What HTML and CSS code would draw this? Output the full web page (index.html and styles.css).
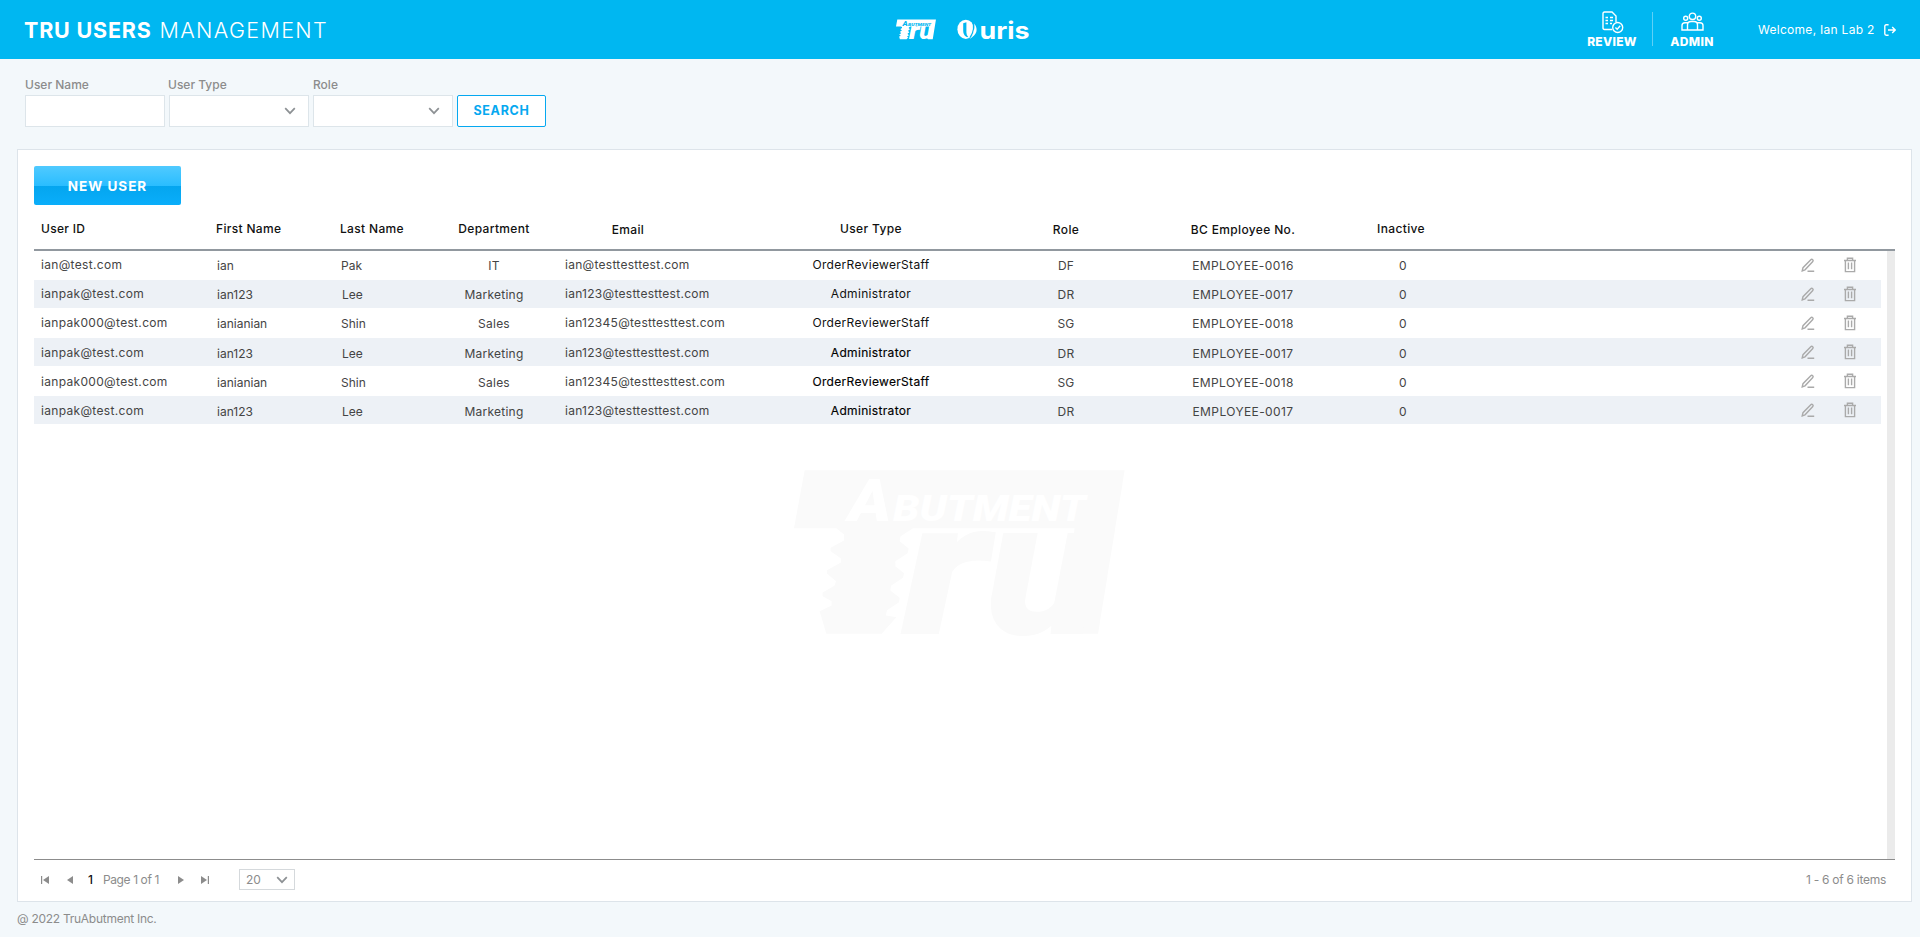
FILE: index.html
```html
<!DOCTYPE html>
<html lang="en">
<head>
<meta charset="utf-8">
<title>Tru Users Management</title>
<link rel="stylesheet" href="styles.css">
</head>
<body>
<svg class="defs" aria-hidden="true">
  <symbol id="edit" viewBox="0 0 14 14"><path d="M1.2 12.8L2 9.7L9.8 1.7Q10.7 .8 11.7 1.8Q12.6 2.7 11.8 3.6L4 11.8ZM6.5 13.2H13.2"/></symbol>
  <symbol id="trash" viewBox="0 0 14 16"><path d="M1 3.5H13M4.4 3.3V1.2H9.6V3.3M2.4 3.7V14.6H11.6V3.7M5.4 5.6V12.2M8.6 5.6V12.2"/></symbol>
  <symbol id="chev" viewBox="0 0 12 8"><path d="M1.2 1.2L6 6.2L10.8 1.2"/></symbol>
</svg>

<header class="topbar">
  <h1 class="title"><b>TRU USERS</b> <span>MANAGEMENT</span></h1>
  <div class="brands">
    <svg class="brand-tru" viewBox="43 47 993 494">
      <path fill="currentColor" d="M75 47H1035L955 538H838L885 221H400L362 246L360 260L387 282L384 296L347 320V335L373 356L370 370L334 394L332 408L360 430L358 443L322 467L318 483L350 488L306 538H140L120 470L156 453V440L129 425V414L165 393L169 380L142 357V347L184 324V312L153 290V280L193 258V240L170 221H43Z"/>
      <text class="tru-big" x="366" y="538" textLength="262" lengthAdjust="spacingAndGlyphs">r</text>
      <text class="tru-big" x="618" y="538" textLength="350" lengthAdjust="spacingAndGlyphs">u</text>
      <text class="tru-small" x="206" y="199" font-size="178" textLength="130" lengthAdjust="spacingAndGlyphs">A</text>
      <text class="tru-small" x="340" y="199" font-size="108" textLength="578" lengthAdjust="spacingAndGlyphs">BUTMENT</text>
    </svg>
    <svg class="brand-uris" viewBox="0 0 74 22">
      <ellipse cx="8.8" cy="10.3" rx="8.4" ry="9.6" fill="#fff"/>
      <path d="M6.2 4.2L9.4 3.2V13.5Q9.4 16.6 11.4 18.3Q6.2 17.6 6.2 12Z" fill="#00b7f1"/>
      <path d="M15.4 2.2Q18.8 10 13 18.6" fill="none" stroke="#00b7f1" stroke-width="1.2"/>
      <path d="M17.3 4.5Q23.6 13.5 12.6 20Q18.3 14 17.3 4.5Z" fill="#fff"/>
      <text class="uris" x="22.5" y="19.6" textLength="50" lengthAdjust="spacingAndGlyphs">uris</text>
    </svg>
  </div>
  <nav class="nav">
    <a class="nav-item review">
      <svg width="22" height="23" viewBox="0 0 22 23"><path d="M10 18.5H2.5Q1 18.5 1 17V2.5Q1 1 2.5 1H10L14 5V11M3.5 6.5H6M3.5 9.5H6M3.5 12.5H6M8 6.5H11M8 9.5H11M8 12.5H10"/><circle cx="15.7" cy="16.5" r="5"/><path d="M13.4 16.5L15.2 18.2L18.2 14.8"/></svg>
      <span>REVIEW</span>
    </a>
    <a class="nav-item admin">
      <svg width="23" height="19" viewBox="0 0 23 19"><circle cx="11.5" cy="4.3" r="3.2"/><circle cx="4.7" cy="6.3" r="2"/><circle cx="18.3" cy="6.3" r="2"/><path d="M6.5 18V13Q6.5 9.5 10 9.5H13Q16.5 9.5 16.5 13V18ZM6.5 18H1V13.5Q1 10.7 4 10.7H7M16.5 18H22V13.5Q22 10.7 19 10.7H16"/></svg>
      <span>ADMIN</span>
    </a>
  </nav>
  <div class="welcome"><span>Welcome, Ian Lab 2</span>
    <svg width="12" height="12" viewBox="0 0 12 12"><path d="M4.6 .8H2.2Q.8 .8 .8 2.2V9.8Q.8 11.2 2.2 11.2H4.6M4 6H11M8.2 3L11.2 6L8.2 9"/></svg>
  </div>
</header>

<form class="filters">
  <label class="field"><span class="l-name">User Name</span><i class="box"></i></label>
  <label class="field"><span class="l-type">User Type</span><i class="box"><svg class="chev"><use href="#chev"/></svg></i></label>
  <label class="field"><span class="l-role">Role</span><i class="box"><svg class="chev"><use href="#chev"/></svg></i></label>
  <button type="button" class="search"><span>SEARCH</span></button>
</form>

<main class="panel">
  <button type="button" class="new-user"><span>NEW USER</span></button>
  <div class="row head">
    <span class="c-id">User ID</span><span class="c-first">First Name</span><span class="c-last">Last Name</span><span class="c-mid">Department</span><span class="c-mid low">Email</span><span class="c-mid">User Type</span><span class="c-mid low">Role</span><span class="c-mid low">BC Employee No.</span><span class="c-mid inactive">Inactive</span>
  </div>
  <section class="body">
    <svg class="watermark" viewBox="43 47 993 494">
      <path fill="currentColor" d="M75 47H1035L955 538H838L885 221H400L362 246L360 260L387 282L384 296L347 320V335L373 356L370 370L334 394L332 408L360 430L358 443L322 467L318 483L350 488L306 538H140L120 470L156 453V440L129 425V414L165 393L169 380L142 357V347L184 324V312L153 290V280L193 258V240L170 221H43Z"/>
      <text class="tru-big" x="366" y="538" textLength="262" lengthAdjust="spacingAndGlyphs">r</text>
      <text class="tru-big" x="618" y="538" textLength="350" lengthAdjust="spacingAndGlyphs">u</text>
      <text class="tru-small" x="206" y="199" font-size="178" textLength="130" lengthAdjust="spacingAndGlyphs">A</text>
      <text class="tru-small" x="340" y="199" font-size="108" textLength="578" lengthAdjust="spacingAndGlyphs">BUTMENT</text>
    </svg>
    <div class="rows">
      <div class="row r1"><span class="c-id">ian@test.com</span><span class="c-first">ian</span><span class="c-last">Pak</span><span class="c-mid low">IT</span><span class="c-email">ian@testtesttest.com</span><span class="c-mid type">OrderReviewerStaff</span><span class="c-mid low">DF</span><span class="c-mid low emp">EMPLOYEE-0016</span><span class="c-mid low">0</span><i></i><svg class="edit"><use href="#edit"/></svg><svg class="trash"><use href="#trash"/></svg></div>
      <div class="row alt"><span class="c-id">ianpak@test.com</span><span class="c-first">ian123</span><span class="c-last lee">Lee</span><span class="c-mid low">Marketing</span><span class="c-email">ian123@testtesttest.com</span><span class="c-mid type">Administrator</span><span class="c-mid low">DR</span><span class="c-mid low emp">EMPLOYEE-0017</span><span class="c-mid low">0</span><i></i><svg class="edit"><use href="#edit"/></svg><svg class="trash"><use href="#trash"/></svg></div>
      <div class="row"><span class="c-id">ianpak000@test.com</span><span class="c-first">ianianian</span><span class="c-last">Shin</span><span class="c-mid low">Sales</span><span class="c-email">ian12345@testtesttest.com</span><span class="c-mid type">OrderReviewerStaff</span><span class="c-mid low">SG</span><span class="c-mid low emp">EMPLOYEE-0018</span><span class="c-mid low">0</span><i></i><svg class="edit"><use href="#edit"/></svg><svg class="trash"><use href="#trash"/></svg></div>
      <div class="row alt late"><span class="c-id">ianpak@test.com</span><span class="c-first">ian123</span><span class="c-last lee">Lee</span><span class="c-mid low">Marketing</span><span class="c-email">ian123@testtesttest.com</span><span class="c-mid type strong">Administrator</span><span class="c-mid low">DR</span><span class="c-mid low emp">EMPLOYEE-0017</span><span class="c-mid low">0</span><i></i><svg class="edit"><use href="#edit"/></svg><svg class="trash"><use href="#trash"/></svg></div>
      <div class="row late"><span class="c-id">ianpak000@test.com</span><span class="c-first">ianianian</span><span class="c-last">Shin</span><span class="c-mid low">Sales</span><span class="c-email">ian12345@testtesttest.com</span><span class="c-mid type strong">OrderReviewerStaff</span><span class="c-mid low">SG</span><span class="c-mid low emp">EMPLOYEE-0018</span><span class="c-mid low">0</span><i></i><svg class="edit"><use href="#edit"/></svg><svg class="trash"><use href="#trash"/></svg></div>
      <div class="row alt late"><span class="c-id">ianpak@test.com</span><span class="c-first">ian123</span><span class="c-last lee">Lee</span><span class="c-mid low">Marketing</span><span class="c-email">ian123@testtesttest.com</span><span class="c-mid type strong">Administrator</span><span class="c-mid low">DR</span><span class="c-mid low emp">EMPLOYEE-0017</span><span class="c-mid low">0</span><i></i><svg class="edit"><use href="#edit"/></svg><svg class="trash"><use href="#trash"/></svg></div>
    </div>
    <div class="scrollbar"></div>
  </section>
  <div class="pager">
    <svg class="p-first" width="8" height="8"><path d="M0 0H1.2V8H0ZM8 0V8L2 4Z"/></svg>
    <svg class="p-prev" width="6" height="8"><path d="M6 0V8L0 4Z"/></svg>
    <span class="p-cur">1</span>
    <span class="p-info">Page 1 of 1</span>
    <svg class="p-next" width="6" height="8"><path d="M0 0V8L6 4Z"/></svg>
    <svg class="p-last" width="8" height="8"><path d="M0 0V8L6 4ZM6.8 0H8V8H6.8Z"/></svg>
    <span class="size"><span>20</span><svg class="chev"><use href="#chev"/></svg></span>
    <span class="count">1 - 6 of 6 items</span>
  </div>
</main>
<footer class="foot">@ 2022 TruAbutment Inc.</footer>
</body>
</html>
```
FILE: styles.css
```css
* { box-sizing: border-box; }
body {
  margin: 0;
  height: 937px;
  overflow: hidden;
  display: flex;
  flex-direction: column;
  background: #f3f8fb;
  font: 12px/16px Inter, "Liberation Sans", sans-serif;
  color: #444;
}
svg { display: block; flex: none; }
.defs { width: 0; height: 0; position: absolute; }
span { white-space: nowrap; }

.tru-big { font: italic 900 574px Roboto, sans-serif; fill: currentColor; }
.tru-small { font-family: Roboto, sans-serif; font-style: italic; font-weight: 900; fill: var(--cut); }
.brand-tru, .brand-uris, .watermark { overflow: visible; }

.topbar {
  height: 59px;
  flex: none;
  display: grid;
  grid-template-columns: 896px 690px 156px 1fr;
  background: #00b7f1;
  color: #fff;
}
.title {
  margin: 0;
  padding: 17px 0 0 24px;
  display: flex;
  gap: 8px;
  font-size: 21.5px;
  line-height: 26px;
  font-weight: 300;
}
.title b { font-weight: 700; letter-spacing: .8px; }
.title span { letter-spacing: 1.35px; }
.brands { display: flex; gap: 21px; padding-top: 19px; }
.brand-tru { width: 40px; height: 21px; --cut: #00b7f1; }
.brand-uris { width: 74px; height: 22px; }
.uris { font: 700 24px Inter, sans-serif; fill: #fff; }
.nav { display: grid; grid-template-columns: 67px 79px; align-items: start; padding-top: 12px; }
.nav svg, .welcome svg { fill: none; stroke: #fff; stroke-width: 1.4; }
.nav-item {
  height: 34px;
  display: flex;
  flex-direction: column;
  align-items: center;
  font-size: 12px;
  line-height: 12px;
  font-weight: 800;
  letter-spacing: .3px;
}
.review { border-right: 1px solid #5fd0f6; padding-right: 14px; }
.review svg { margin: -1px 0 2px 2px; }
.admin { padding-right: 1px; }
.admin svg { margin: 0 0 5px; }
.welcome { display: flex; gap: 9px; padding: 22px 0 0 16px; letter-spacing: .28px; }
.welcome svg { margin-top: 2px; }

.filters {
  height: 90px;
  flex: none;
  display: flex;
  gap: 4px;
  padding: 18px 0 0 25px;
  color: #8c8c8c;
  font-weight: 500;
}
.field { width: 140px; }
.field span { display: block; height: 18px; }
.l-type { margin-left: -1px; }
.box {
  height: 32px;
  display: flex;
  align-items: center;
  justify-content: flex-end;
  padding-right: 12px;
  background: #fff;
  border: 1px solid #dde5ea;
}
.chev { width: 12px; height: 8px; fill: none; stroke: #8d9194; stroke-width: 1.7; }
.search {
  width: 89px;
  height: 32px;
  margin: 18px 0 0;
  padding: 0;
  background: #fff;
  border: 1px solid #05a8f0;
  border-radius: 2px;
  color: #05a8f0;
  font: 700 12.5px/16px Inter, sans-serif;
  letter-spacing: .7px;
}

.panel {
  width: 1895px;
  height: 753px;
  flex: none;
  margin-left: 17px;
  display: flex;
  flex-direction: column;
  background: #fff;
  border: 1px solid #dde4ea;
  padding: 16px 16px 0;
}
.new-user {
  width: 147px;
  height: 39px;
  flex: none;
  border: 0;
  border-radius: 2px;
  background: linear-gradient(#50caff 0, #2abdff 51%, #04a5ef 51%, #0aaefa 100%);
  color: #fff;
  font: 700 13.5px/16px Inter, sans-serif;
  letter-spacing: 1px;
}
.row {
  display: grid;
  grid-template-columns: 176px 124px 106px 108px 160px 326px 64px 290px 30px 1fr 42px 42px;
  width: 1847px;
  height: 30px;
  padding: 7px 10px 0 0;
}
.row.r1 { height: 29px; padding-top: 6px; }
.row.alt { height: 28px; padding-top: 6px; background: #edf1f6; }
.row.late span { margin-top: 1px; }
.row.head {
  height: 46px;
  flex: none;
  width: 1861px;
  padding-top: 16px;
  border-bottom: 2px solid #91989f;
  color: #111;
  font-weight: 500;
  letter-spacing: .33px;
}
.c-id { padding-left: 7px; letter-spacing: .32px; }
.head .c-id { letter-spacing: .3px; }
.c-first { padding: 1px 0 0 7px; }
.c-last { padding: 1px 0 0 7px; }
.c-last.lee { padding-left: 8px; }
.head .c-first, .head .c-last { padding: 0 0 0 6px; }
.c-mid { display: flex; justify-content: center; letter-spacing: .25px; }
.head .c-mid { letter-spacing: .35px; }
.low { padding-top: 1px; }
.c-mid.emp { letter-spacing: .4px; }
.c-email { padding-left: 17px; letter-spacing: .28px; }
.c-mid.type { color: #111; letter-spacing: .33px; }
.c-mid.strong { color: #000; -webkit-text-stroke: .15px #000; }
.inactive { margin-left: -4px; }
.edit, .trash { fill: none; stroke: #aaa; stroke-width: 1.4; justify-self: center; }
.edit { width: 14px; height: 14px; margin-top: 1px; }
.trash { width: 14px; height: 16px; }

.body {
  position: relative;
  height: 609px;
  flex: none;
  width: 1861px;
  display: flex;
  justify-content: space-between;
  border-bottom: 1px solid #8c8c8c;
}
.rows { position: relative; }
.watermark { position: absolute; left: 760px; top: 219px; width: 331px; height: 165px; color: #fafafa; --cut: #fff; }
.scrollbar { width: 8px; background: #ebebeb; }

.pager { width: 1861px; height: 39px; display: flex; align-items: center; color: #8c8c8c; padding: 0 9px 0 7px; }
.pager > svg { fill: #8c8c8c; }
.p-prev { margin-left: 18px; }
.p-cur { color: #111; font-weight: 500; margin-left: 15px; width: 15px; }
.p-info { width: 57px; letter-spacing: -.4px; }
.p-next { margin-left: 18px; }
.p-last { margin-left: 17px; }
.size {
  width: 56px;
  height: 21px;
  margin-left: 30px;
  padding: 0 6px;
  border: 1px solid #d5d9dc;
  display: flex;
  align-items: center;
  justify-content: space-between;
}
.count { margin-left: auto; letter-spacing: -.27px; }
.foot { padding: 9px 0 0 17px; color: #8c8c8c; letter-spacing: -.27px; }
```
